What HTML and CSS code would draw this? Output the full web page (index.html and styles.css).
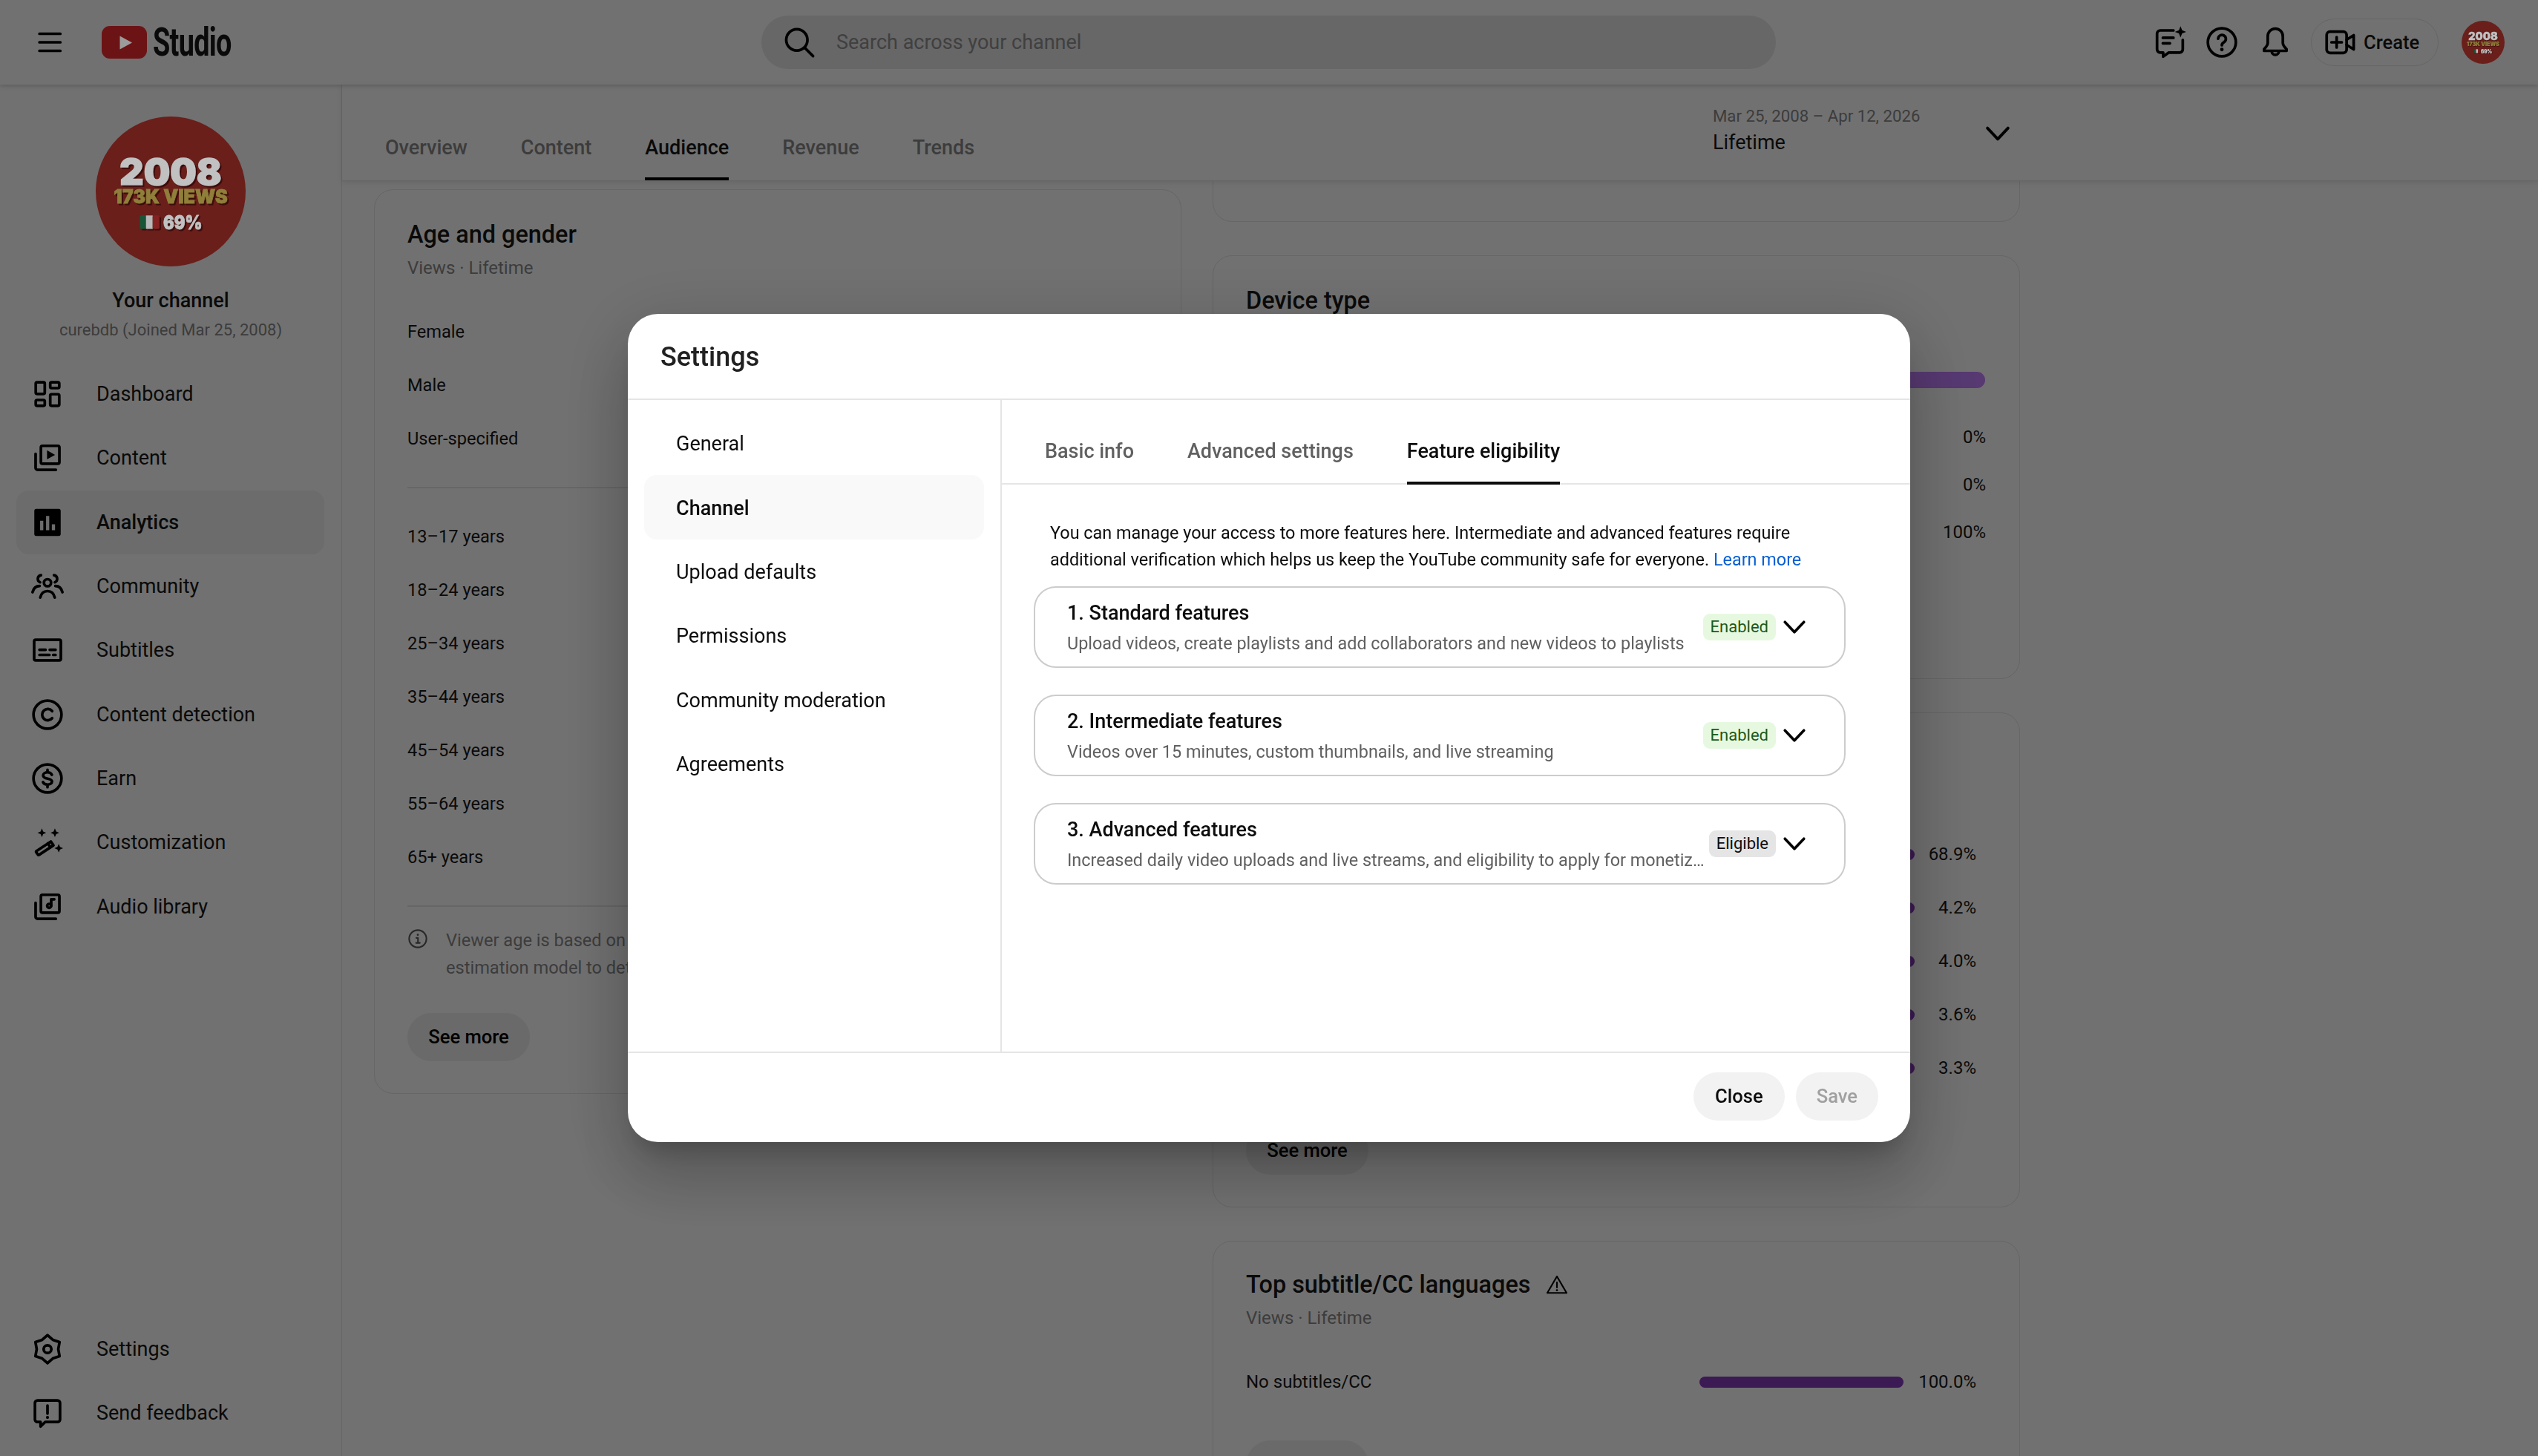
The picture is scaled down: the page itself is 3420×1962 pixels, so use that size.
FILE: index.html
```html
<!DOCTYPE html>
<html lang="en">
<head>
    <meta charset="UTF-8">
    <meta name="viewport" content="width=device-width, initial-scale=1.0">
    <title>Channel analytics - YouTube Studio</title>
    <link rel="stylesheet" href="styles.css">
</head>
<body>
    <svg class="sprite" aria-hidden="true">
        <symbol id="channel-avatar" viewBox="0 0 200 200">
            <circle cx="100" cy="100" r="100" fill="#852722"/>
            <g class="avatar-text">
                <text x="100" y="91" text-anchor="middle" class="avatar-year" textLength="136" lengthAdjust="spacingAndGlyphs">2008</text>
                <text x="100" y="116" text-anchor="middle" class="avatar-views" textLength="152" lengthAdjust="spacingAndGlyphs">173K VIEWS</text>
                <rect x="59" y="132" width="8" height="18" rx="2" fill="#1f6b45"/>
                <rect x="67" y="132" width="9" height="18" fill="#e6e6e6"/>
                <rect x="76" y="132" width="9" height="18" rx="2" fill="#a82a2a"/>
                <text x="90" y="150" class="avatar-share" textLength="52" lengthAdjust="spacingAndGlyphs">69%</text>
            </g>
        </symbol>
        <symbol id="chevron" viewBox="0 0 24 24">
            <path d="M5.600 8.600 12 15.400l6.400-6.800" fill="none" stroke="currentColor" stroke-width="1.800" stroke-linecap="round" stroke-linejoin="round"/>
        </symbol>
    </svg>

    <header class="topbar">
        <div class="topbar-left">
            <svg class="icon" viewBox="0 0 24 24"><path class="line" d="M5.600 6.700h13M5.600 12h13M5.600 17.300h13"/></svg>
            <div class="logo">
                <svg class="logo-mark" viewBox="0 0 61 44"><rect width="61" height="44" rx="11" fill="#87191b"/><path d="M24.500 13.500 41 22.500 24.500 31.500z" fill="#c4c4c4"/></svg>
                <span class="logo-text">Studio</span>
            </div>
        </div>
        <div class="search">
            <svg class="icon" viewBox="0 0 24 24"><circle class="line" cx="10.500" cy="10.500" r="6.600"/><path class="line" d="M15.400 15.400 20.600 20.600"/></svg>
            <span>Search across your channel</span>
        </div>
        <div class="topbar-right">
            <svg class="icon" viewBox="0 0 24 24"><path class="line" d="M14.200 4.600H6a2 2 0 0 0-2 2v9.800a2 2 0 0 0 2 2h1.800v2.500l3.500-2.500H18a2 2 0 0 0 2-2V10.500M7.600 9.200h6.600M7.600 12.600h4.400"/><path d="M18.600 2l1 2.500 2.500 1-2.500 1-1 2.500-1-2.500-2.500-1 2.500-1z" fill="#000"/></svg>
            <svg class="icon" viewBox="0 0 24 24"><circle class="line" cx="12" cy="12" r="8.700"/><path class="line" d="M9.700 9.800a2.400 2.400 0 1 1 3.600 2.100c-.9.500-1.300 1-1.300 1.900"/><circle cx="12" cy="16.500" r="1.100" fill="#000"/></svg>
            <svg class="icon icon-bell" viewBox="0 0 24 24"><path class="line" d="M12 3.500c-2.900 0-4.700 2.300-4.700 5v4c0 1.500-1 2.500-2.300 3.800v1h14v-1c-1.300-1.300-2.300-2.300-2.300-3.800v-4c0-2.700-1.800-5-4.700-5zM9.800 17.600a2.200 2.200 0 0 0 4.400 0"/></svg>
            <div class="create-btn">
                <svg class="icon" viewBox="0 0 24 24"><rect class="line" x="3.800" y="5.400" width="12.400" height="13.200" rx="2"/><path class="line" d="M10 8.800v6.400M6.800 12h6.400M16.200 10.400l4.400-2.800v8.800l-4.400-2.800"/></svg>
                <span>Create</span>
            </div>
            <svg class="topbar-avatar"><use href="#channel-avatar"/></svg>
        </div>
    </header>

    <div class="page">
        <aside class="sidebar">
            <div class="profile">
                <svg class="profile-avatar"><use href="#channel-avatar"/></svg>
                <div class="profile-name">Your channel</div>
                <div class="profile-handle">curebdb (Joined Mar 25, 2008)</div>
            </div>
            <nav class="nav">
                <a class="nav-item">
                    <svg class="icon" viewBox="0 0 24 24"><rect class="line" x="4.700" y="4.700" width="5.600" height="7.200" rx=".8"/><rect class="line" x="13.700" y="4.700" width="5.600" height="3.600" rx=".8"/><rect class="line" x="4.700" y="15.700" width="5.600" height="3.600" rx=".8"/><rect class="line" x="13.700" y="12.100" width="5.600" height="7.200" rx=".8"/></svg>
                    Dashboard
                </a>
                <a class="nav-item">
                    <svg class="icon" viewBox="0 0 24 24"><rect class="line" x="7.900" y="4.500" width="11.500" height="11.100" rx="1"/><path class="line" d="M4.600 9.500v8.700a1.200 1.200 0 0 0 1.200 1.200h11.400"/><path d="M11.700 7.300l5 2.800-5 2.800z" fill="#000"/></svg>
                    Content
                </a>
                <a class="nav-item nav-item-active">
                    <svg class="icon" viewBox="0 0 24 24"><path fill="#000" fill-rule="evenodd" d="M5 3.600h14a1.200 1.200 0 0 1 1.200 1.200v14.400a1.200 1.200 0 0 1-1.200 1.200H5a1.200 1.200 0 0 1-1.200-1.200V4.800A1.200 1.200 0 0 1 5 3.600zM7.400 11v5.800h2V11zm3.700-3v8.800h2V8zm3.600 5.200v3.600h2v-3.600z"/></svg>
                    Analytics
                </a>
                <a class="nav-item">
                    <svg class="icon" viewBox="0 0 24 24"><circle class="line" cx="12" cy="9.800" r="2.200"/><path class="line" d="M7.500 19c.6-2.700 2.400-4 4.500-4s3.900 1.300 4.500 4M8 5.100a2.300 2.300 0 0 0-.6 4.400M2.700 15.700c.6-2.500 2.300-3.900 4.400-3.900M16 5.100a2.300 2.300 0 0 1 .6 4.400M21.300 15.700c-.6-2.500-2.300-3.900-4.400-3.900"/></svg>
                    Community
                </a>
                <a class="nav-item">
                    <svg class="icon" viewBox="0 0 24 24"><rect class="line" x="3.700" y="5.600" width="16.600" height="12.800" rx="1"/><path class="line" d="M7 11.800h3.800M13.400 11.800h3.600M7 15h6.200M15.600 15H17"/></svg>
                    Subtitles
                </a>
                <a class="nav-item">
                    <svg class="icon" viewBox="0 0 24 24"><circle class="line" cx="12" cy="12" r="8.700"/><path class="line" d="M14.900 9.800a3.500 3.500 0 1 0 0 4.400"/></svg>
                    Content detection
                </a>
                <a class="nav-item">
                    <svg class="icon" viewBox="0 0 24 24"><circle class="line" cx="12" cy="12" r="8.700"/><path class="line" d="M14.700 9.700c-.4-.9-1.400-1.500-2.700-1.500-1.500 0-2.700.8-2.700 1.900 0 2.800 5.500 1.200 5.500 3.800 0 1.100-1.200 1.900-2.800 1.900-1.300 0-2.400-.6-2.800-1.500M12 6.600v1.600M12 15.800v1.600"/></svg>
                    Earn
                </a>
                <a class="nav-item">
                    <svg class="icon" viewBox="0 0 24 24"><path class="line" d="M5.200 17.400l8.900-5.900 1.600 2.400-8.900 5.900a.6.600 0 0 1-.8-.2l-1-1.400a.6.600 0 0 1 .2-.8z"/><path class="line" d="M12.200 12.700l1.600 2.400"/><path d="M8.500 3.400l.8 1.900 1.900.8-1.900.8-.8 1.900-.8-1.900-1.900-.8 1.900-.8zM16.600 3.400l.8 1.900 1.900.8-1.900.8-.8 1.900-.8-1.900-1.900-.8 1.900-.8zM19 13l.8 1.900 1.900.8-1.900.8-.8 1.900-.8-1.900-1.900-.8 1.900-.8z" fill="#000"/></svg>
                    Customization
                </a>
                <a class="nav-item">
                    <svg class="icon" viewBox="0 0 24 24"><rect class="line" x="7.900" y="4.500" width="11.500" height="11.100" rx="1"/><path class="line" d="M4.600 9.500v8.700a1.200 1.200 0 0 0 1.200 1.200h11.400"/><circle class="line" cx="13" cy="11.400" r="1.200"/><path class="line" d="M14.300 11.400V7.300h1.900"/></svg>
                    Audio library
                </a>
            </nav>
            <div class="nav nav-bottom">
                <a class="nav-item">
                    <svg class="icon" viewBox="0 0 24 24"><path class="line" d="M12 3.300l3.300 2.900 4.200 1.400-.8 4.400.8 4.400-4.200 1.400-3.300 2.900-3.300-2.900-4.200-1.400.8-4.400-.8-4.400 4.200-1.400z"/><circle class="line" cx="12" cy="12" r="2.400"/></svg>
                    Settings
                </a>
                <a class="nav-item">
                    <svg class="icon" viewBox="0 0 24 24"><path class="line" d="M5.800 4.200h12.400a1.600 1.600 0 0 1 1.600 1.600v10.200a1.600 1.600 0 0 1-1.600 1.600h-7.600l-2.900 2.800v-2.800H5.800A1.600 1.600 0 0 1 4.200 16V5.800a1.600 1.600 0 0 1 1.600-1.600z"/><path class="line" d="M12 7.400v5"/><circle cx="12" cy="14.800" r="1" fill="#000"/></svg>
                    Send feedback
                </a>
            </div>
        </aside>

        <main class="main">
            <div class="main-header">
                <div class="tabs">
                    <a class="tab">Overview</a>
                    <a class="tab">Content</a>
                    <a class="tab tab-active">Audience</a>
                    <a class="tab">Revenue</a>
                    <a class="tab">Trends</a>
                </div>
                <div class="date-picker">
                    <div>
                        <div class="date-range">Mar 25, 2008 – Apr 12, 2026</div>
                        <div class="date-label">Lifetime</div>
                    </div>
                    <svg class="chevron-lg"><use href="#chevron"/></svg>
                </div>
            </div>

            <div class="content">
                <div class="column">
                    <section class="card">
                        <h2 class="card-title">Age and gender</h2>
                        <div class="card-sub">Views · Lifetime</div>
                        <div class="rows rows-gender">
                            <div class="row">Female</div>
                            <div class="row">Male</div>
                            <div class="row">User-specified</div>
                        </div>
                        <div class="rows rows-age">
                            <div class="row">13–17 years</div>
                            <div class="row">18–24 years</div>
                            <div class="row">25–34 years</div>
                            <div class="row">35–44 years</div>
                            <div class="row">45–54 years</div>
                            <div class="row">55–64 years</div>
                            <div class="row">65+ years</div>
                        </div>
                        <div class="age-note">
                            <svg class="info-icon" viewBox="0 0 24 24"><circle class="line" cx="12" cy="12" r="10"/><path class="line" d="M10.300 11h1.900v5.600M10 16.800h4.400"/><circle cx="12" cy="7.400" r="1.200" fill="#333"/></svg>
                            <p>Viewer age is based on<br>estimation model to determine</p>
                        </div>
                        <a class="see-more">See more</a>
                    </section>
                </div>

                <div class="column column-right">
                    <section class="card card-scrolled">
                        <div class="peek-line"><span>g</span><span>p</span></div>
                    </section>

                    <section class="card card-device">
                        <h2 class="card-title">Device type</h2>
                        <div class="device-bar"></div>
                        <div class="device-row">0%</div>
                        <div class="device-row">0%</div>
                        <div class="device-row">100%</div>
                    </section>

                    <section class="card card-geo">
                        <div class="geo-rows">
                            <div class="geo-row"><span class="geo-bar"></span><span class="geo-value">68.9%</span></div>
                            <div class="geo-row"><span class="geo-bar"></span><span class="geo-value">4.2%</span></div>
                            <div class="geo-row"><span class="geo-bar"></span><span class="geo-value">4.0%</span></div>
                            <div class="geo-row"><span class="geo-bar"></span><span class="geo-value">3.6%</span></div>
                            <div class="geo-row"><span class="geo-bar"></span><span class="geo-value">3.3%</span></div>
                        </div>
                        <a class="see-more">See more</a>
                    </section>

                    <section class="card card-subtitles">
                        <h2 class="card-title">
                            Top subtitle/CC languages
                            <svg class="warn-icon" viewBox="0 0 24 24"><path class="line" d="M12 3.200 22.400 21H1.600z"/><path class="line" d="M12 9.600v5.600"/><circle cx="12" cy="18" r="1.100" fill="#000"/></svg>
                        </h2>
                        <div class="card-sub">Views · Lifetime</div>
                        <div class="lang-row">
                            <span>No subtitles/CC</span>
                            <span class="lang-bar"></span>
                            <span class="lang-value">100.0%</span>
                        </div>
                        <a class="see-more">See more</a>
                    </section>
                </div>
            </div>
        </main>
    </div>

    <div class="scrim">
        <div class="modal">
            <div class="modal-header">Settings</div>
            <div class="modal-body">
                <div class="modal-nav">
                    <a class="modal-nav-item">General</a>
                    <a class="modal-nav-item modal-nav-active">Channel</a>
                    <a class="modal-nav-item">Upload defaults</a>
                    <a class="modal-nav-item">Permissions</a>
                    <a class="modal-nav-item">Community moderation</a>
                    <a class="modal-nav-item">Agreements</a>
                </div>
                <div class="modal-pane">
                    <div class="modal-tabs">
                        <a class="modal-tab">Basic info</a>
                        <a class="modal-tab">Advanced settings</a>
                        <a class="modal-tab modal-tab-active">Feature eligibility</a>
                    </div>
                    <div class="pane-content">
                        <p class="intro">You can manage your access to more features here. Intermediate and advanced features require additional verification which helps us keep the YouTube community safe for everyone. <a class="link">Learn more</a></p>
                        <div class="feature">
                            <div class="feature-text">
                                <div class="feature-title">1. Standard features</div>
                                <div class="feature-sub">Upload videos, create playlists and add collaborators and new videos to playlists</div>
                            </div>
                            <span class="badge badge-enabled">Enabled</span>
                            <svg class="chevron"><use href="#chevron"/></svg>
                        </div>
                        <div class="feature">
                            <div class="feature-text">
                                <div class="feature-title">2. Intermediate features</div>
                                <div class="feature-sub">Videos over 15 minutes, custom thumbnails, and live streaming</div>
                            </div>
                            <span class="badge badge-enabled">Enabled</span>
                            <svg class="chevron"><use href="#chevron"/></svg>
                        </div>
                        <div class="feature">
                            <div class="feature-text">
                                <div class="feature-title">3. Advanced features</div>
                                <div class="feature-sub">Increased daily video uploads and live streams, and eligibility to apply for monetization</div>
                            </div>
                            <span class="badge badge-eligible">Eligible</span>
                            <svg class="chevron"><use href="#chevron"/></svg>
                        </div>
                    </div>
                </div>
            </div>
            <div class="modal-footer">
                <a class="btn btn-close">Close</a>
                <a class="btn btn-save">Save</a>
            </div>
        </div>
    </div>
</body>
</html>
```

FILE: styles.css
```css
html, body {
    margin: 0;
    height: 100%;
}

body {
    width: 3420px;
    height: 1962px;
    overflow: hidden;
    font-family: Roboto, "Liberation Sans", sans-serif;
    font-size: 27px;
    color: #0d0d0d;
    background: #8e8e8e;
}

.sprite {
    display: none;
}

.icon {
    width: 52px;
    height: 52px;
    flex-shrink: 0;
}

.line {
    fill: none;
    stroke: #000;
    stroke-width: 1.7;
    stroke-linecap: round;
    stroke-linejoin: round;
}

.avatar-text {
    font-family: Inter, Roboto, sans-serif;
    font-weight: 900;
    filter: drop-shadow(2px 2px 0 rgba(60, 10, 10, 0.8));
}

.avatar-year {
    font-size: 48px;
    fill: #f2f2f2;
    stroke: #f2f2f2;
    stroke-width: 1.5px;
}

.avatar-views {
    font-size: 25px;
    fill: #b39f49;
    stroke: #b39f49;
    stroke-width: 0.8px;
}

.avatar-share {
    font-size: 25px;
    fill: #f2f2f2;
    stroke: #f2f2f2;
    stroke-width: 0.8px;
}

/* Top bar */
.topbar {
    height: 114px;
    display: flex;
    align-items: center;
    position: relative;
    z-index: 2;
    box-shadow: 0 2px 6px rgba(0, 0, 0, 0.18);
}

.topbar-left {
    width: 1026px;
    padding-left: 41px;
    box-sizing: border-box;
    display: flex;
    align-items: center;
    gap: 44px;
}

.logo {
    display: flex;
    align-items: center;
    gap: 8px;
}

.logo-mark {
    width: 61px;
    height: 44px;
}

.logo-text {
    display: inline-block;
    width: 106px;
    font-size: 54px;
    line-height: 44px;
    font-weight: 700;
    letter-spacing: -1px;
    transform: scaleX(0.7);
    transform-origin: left center;
    color: #0d0d0d;
}

.search {
    width: 1367px;
    height: 72px;
    padding-left: 25px;
    box-sizing: border-box;
    display: flex;
    align-items: center;
    gap: 24px;
    border-radius: 36px;
    background: #818181;
    color: #505050;
}

.topbar-right {
    flex: 1;
    display: flex;
    align-items: center;
    justify-content: flex-end;
    gap: 18px;
    padding-right: 45px;
}

.icon-bell {
    margin-left: 2px;
}

.create-btn {
    width: 172px;
    height: 64px;
    margin: 0 13px 0 4px;
    box-sizing: border-box;
    padding-left: 12px;
    display: flex;
    align-items: center;
    gap: 6px;
    border: 1px solid #808080;
    border-radius: 32px;
    font-size: 25.6px;
    font-weight: 500;
}

.topbar-avatar {
    width: 58px;
    height: 58px;
}

/* Layout */
.page {
    display: flex;
    height: 1848px;
}

.sidebar {
    width: 461px;
    flex-shrink: 0;
    box-sizing: border-box;
    border-right: 1px solid #808080;
    display: flex;
    flex-direction: column;
    padding-top: 43px;
}

.profile {
    display: flex;
    flex-direction: column;
    align-items: center;
    text-align: center;
    height: 331px;
}

.profile-avatar {
    width: 202px;
    height: 202px;
    margin-bottom: 28px;
}

.profile-name {
    line-height: 36px;
    font-weight: 500;
}

.profile-handle {
    margin-top: 4px;
    font-size: 22px;
    line-height: 36px;
    color: #4c4c4c;
}

.nav-item {
    height: 86.3px;
    margin: 0 23px 0 22px;
    padding-left: 16px;
    display: flex;
    align-items: center;
    gap: 40px;
    border-radius: 17px;
    color: #0d0d0d;
}

.nav-item-active {
    background: #878787;
    font-weight: 500;
}

.nav-bottom {
    margin-top: auto;
    margin-bottom: 15px;
}

/* Main */
.main {
    flex: 1;
    min-width: 0;
    display: flex;
    flex-direction: column;
}

.main-header {
    height: 130px;
    box-sizing: border-box;
    flex-shrink: 0;
    display: flex;
    border-bottom: 1px solid #808080;
    box-shadow: 0 2px 8px rgba(0, 0, 0, 0.1);
    position: relative;
    z-index: 1;
    background: #8e8e8e;
}

.tabs {
    flex: 1;
    display: flex;
    align-items: flex-end;
    gap: 72px;
    padding-left: 58px;
}

.tab {
    line-height: 36px;
    padding-bottom: 22px;
    border-bottom: 4px solid transparent;
    font-weight: 500;
    color: #4c4c4c;
}

.tab-active {
    color: #0d0d0d;
    border-bottom-color: #000;
}

.date-picker {
    width: 410px;
    margin-right: 702px;
    display: flex;
    align-items: flex-start;
    justify-content: space-between;
    padding-top: 24px;
    box-sizing: border-box;
}

.date-range {
    font-size: 22.2px;
    line-height: 36px;
    color: #4c4c4c;
}

.date-label {
    line-height: 36px;
}

.chevron-lg {
    width: 52px;
    height: 52px;
    margin-top: 16px;
    color: #000;
}

.content {
    flex: 1;
    overflow: hidden;
    padding: 11px 0 0 43px;
    display: flex;
    gap: 42px;
    align-items: flex-start;
}

.column {
    width: 1088px;
    display: flex;
    flex-direction: column;
    gap: 45px;
}

.column-right {
    margin-top: -71px;
}

.card {
    box-sizing: border-box;
    border: 1px solid #808080;
    border-radius: 26px;
    padding: 38px 45px 43px 44px;
}

.card-title {
    margin: 0;
    font-size: 32.4px;
    line-height: 44px;
    font-weight: 500;
    display: flex;
    align-items: center;
    gap: 21px;
}

.card-sub {
    margin-top: 5px;
    font-size: 24px;
    line-height: 36px;
    color: #4c4c4c;
}

.row {
    height: 72px;
    display: flex;
    align-items: center;
    font-size: 23.6px;
}

.rows-gender {
    margin-top: 32px;
    padding-bottom: 29px;
    border-bottom: 2px solid #808080;
}

.rows-age {
    margin-top: 29px;
    padding-bottom: 29px;
    border-bottom: 2px solid #808080;
}

.age-note {
    display: flex;
    gap: 24px;
    margin-top: 27px;
}

.age-note p {
    margin: 0;
    font-size: 23.6px;
    line-height: 37px;
    color: #4c4c4c;
    white-space: nowrap;
}

.info-icon {
    width: 28px;
    height: 28px;
    margin: 2px 0 0 0;
    flex-shrink: 0;
}

.info-icon .line {
    stroke: #333;
    stroke-width: 1.8;
}

.see-more {
    display: block;
    width: 165px;
    box-sizing: border-box;
    margin-top: 42px;
    height: 65px;
    line-height: 65px;
    text-align: center;
    border-radius: 33px;
    background: #858585;
    font-size: 25.6px;
    font-weight: 500;
    color: #000;
}

.card-scrolled {
    height: 115px;
    padding: 0;
}

.peek-line {
    display: flex;
    height: 60px;
    padding-left: 151px;
    gap: 258px;
    align-items: flex-end;
    font-size: 24px;
    line-height: 29px;
}

.card-device {
    height: 571px;
}

.device-bar {
    height: 22px;
    margin: 74px 1px 0 auto;
    width: 200px;
    border-radius: 11px;
    background: #6e488f;
}

.device-row {
    height: 64px;
    line-height: 64px;
    font-size: 24px;
    text-align: right;
}

.device-bar + .device-row {
    margin-top: 34px;
}

.card-geo {
    padding-top: 154px;
}

.geo-row {
    height: 72px;
    display: flex;
    align-items: center;
    justify-content: flex-end;
    padding-right: 13px;
}

.geo-bar {
    width: 100px;
    height: 15px;
    border-radius: 8px;
    background: #4c2169;
}

.geo-value {
    width: 83px;
    text-align: right;
    font-size: 24px;
}

.card-geo .see-more {
    margin-top: 43px;
}

.card-subtitles {
    padding-top: 36px;
}

.lang-row {
    margin-top: 32px;
    height: 72px;
    display: flex;
    align-items: center;
    font-size: 24px;
    padding-right: 13px;
}

.lang-bar {
    margin-left: auto;
    width: 275px;
    height: 15px;
    border-radius: 8px;
    background: #4c2169;
}

.lang-value {
    width: 98px;
    text-align: right;
}

.card-subtitles .see-more {
    margin-top: 43px;
}

.warn-icon {
    width: 30px;
    height: 30px;
}

/* Dialog */
.scrim {
    position: fixed;
    inset: 0;
    z-index: 10;
    background: rgba(0, 0, 0, 0.2);
    display: flex;
    align-items: center;
    justify-content: center;
}

.modal {
    width: 1728px;
    height: 1116px;
    display: flex;
    flex-direction: column;
    background: #fff;
    border-radius: 41px;
    box-shadow: 0 52px 82px 6px rgba(0, 0, 0, 0.14), 0 19px 99px 17px rgba(0, 0, 0, 0.12), 0 24px 32px -15px rgba(0, 0, 0, 0.2);
}

.modal-header {
    height: 116px;
    flex-shrink: 0;
    padding: 2px 0 0 44px;
    box-sizing: border-box;
    display: flex;
    align-items: center;
    border-bottom: 2px solid #e5e5e5;
    font-size: 36px;
    font-weight: 500;
    color: #212121;
}

.modal-body {
    flex: 1;
    min-height: 0;
    display: flex;
}

.modal-nav {
    width: 504px;
    flex-shrink: 0;
    box-sizing: border-box;
    border-right: 2px solid #e5e5e5;
    padding: 15px 22px 0;
}

.modal-nav-item {
    height: 86.4px;
    box-sizing: border-box;
    padding: 2px 0 0 43px;
    display: flex;
    align-items: center;
    border-radius: 17px;
    color: #0d0d0d;
}

.modal-nav-active {
    background: #f9f9f9;
    font-weight: 500;
}

.modal-pane {
    flex: 1;
    min-width: 0;
}

.modal-tabs {
    height: 114px;
    box-sizing: border-box;
    display: flex;
    align-items: flex-end;
    gap: 72px;
    padding-left: 58px;
    border-bottom: 2px solid #e5e5e5;
}

.modal-tab {
    line-height: 36px;
    padding-bottom: 23px;
    border-bottom: 4px solid transparent;
    margin-bottom: -2px;
    font-weight: 500;
    color: #606060;
}

.modal-tab-active {
    color: #0d0d0d;
    border-bottom-color: #0d0d0d;
}

.pane-content {
    padding: 47px 87px 0 43px;
}

.intro {
    margin: 0 0 18px;
    padding-left: 22px;
    font-size: 23.4px;
    line-height: 36px;
    color: #0d0d0d;
}

.link {
    color: #065fd4;
}

.feature {
    height: 110px;
    box-sizing: border-box;
    margin-bottom: 36px;
    padding: 0 43px 0 43px;
    display: flex;
    align-items: center;
    border: 2px solid #ccc;
    border-radius: 30px;
}

.feature-text {
    flex: 1;
    min-width: 0;
    padding-top: 2px;
}

.feature-title {
    line-height: 36px;
    font-weight: 500;
}

.feature-sub {
    margin-top: 5px;
    font-size: 23.4px;
    line-height: 36px;
    color: #606060;
    white-space: nowrap;
    overflow: hidden;
    text-overflow: ellipsis;
}

.badge {
    flex-shrink: 0;
    height: 36px;
    line-height: 36px;
    margin-left: 5px;
    padding: 0 10px;
    border-radius: 9px;
    font-size: 22px;
}

.badge-enabled {
    background: #e6f9e0;
    color: #1c5a1c;
}

.badge-eligible {
    background: #e5e5e5;
    color: #0d0d0d;
}

.chevron {
    width: 48px;
    height: 48px;
    margin-left: 1px;
    flex-shrink: 0;
    color: #000;
}

.modal-footer {
    height: 122px;
    box-sizing: border-box;
    flex-shrink: 0;
    border-top: 2px solid #e5e5e5;
    display: flex;
    justify-content: flex-end;
    gap: 15px;
    padding: 26px 43px 0 0;
}

.btn {
    height: 65px;
    line-height: 65px;
    padding: 0 29px;
    border-radius: 33px;
    background: #f2f2f2;
    font-size: 25.6px;
    font-weight: 500;
}

.btn-close {
    color: #0d0d0d;
}

.btn-save {
    padding: 0 28px;
    color: #a0a0a0;
}
```
